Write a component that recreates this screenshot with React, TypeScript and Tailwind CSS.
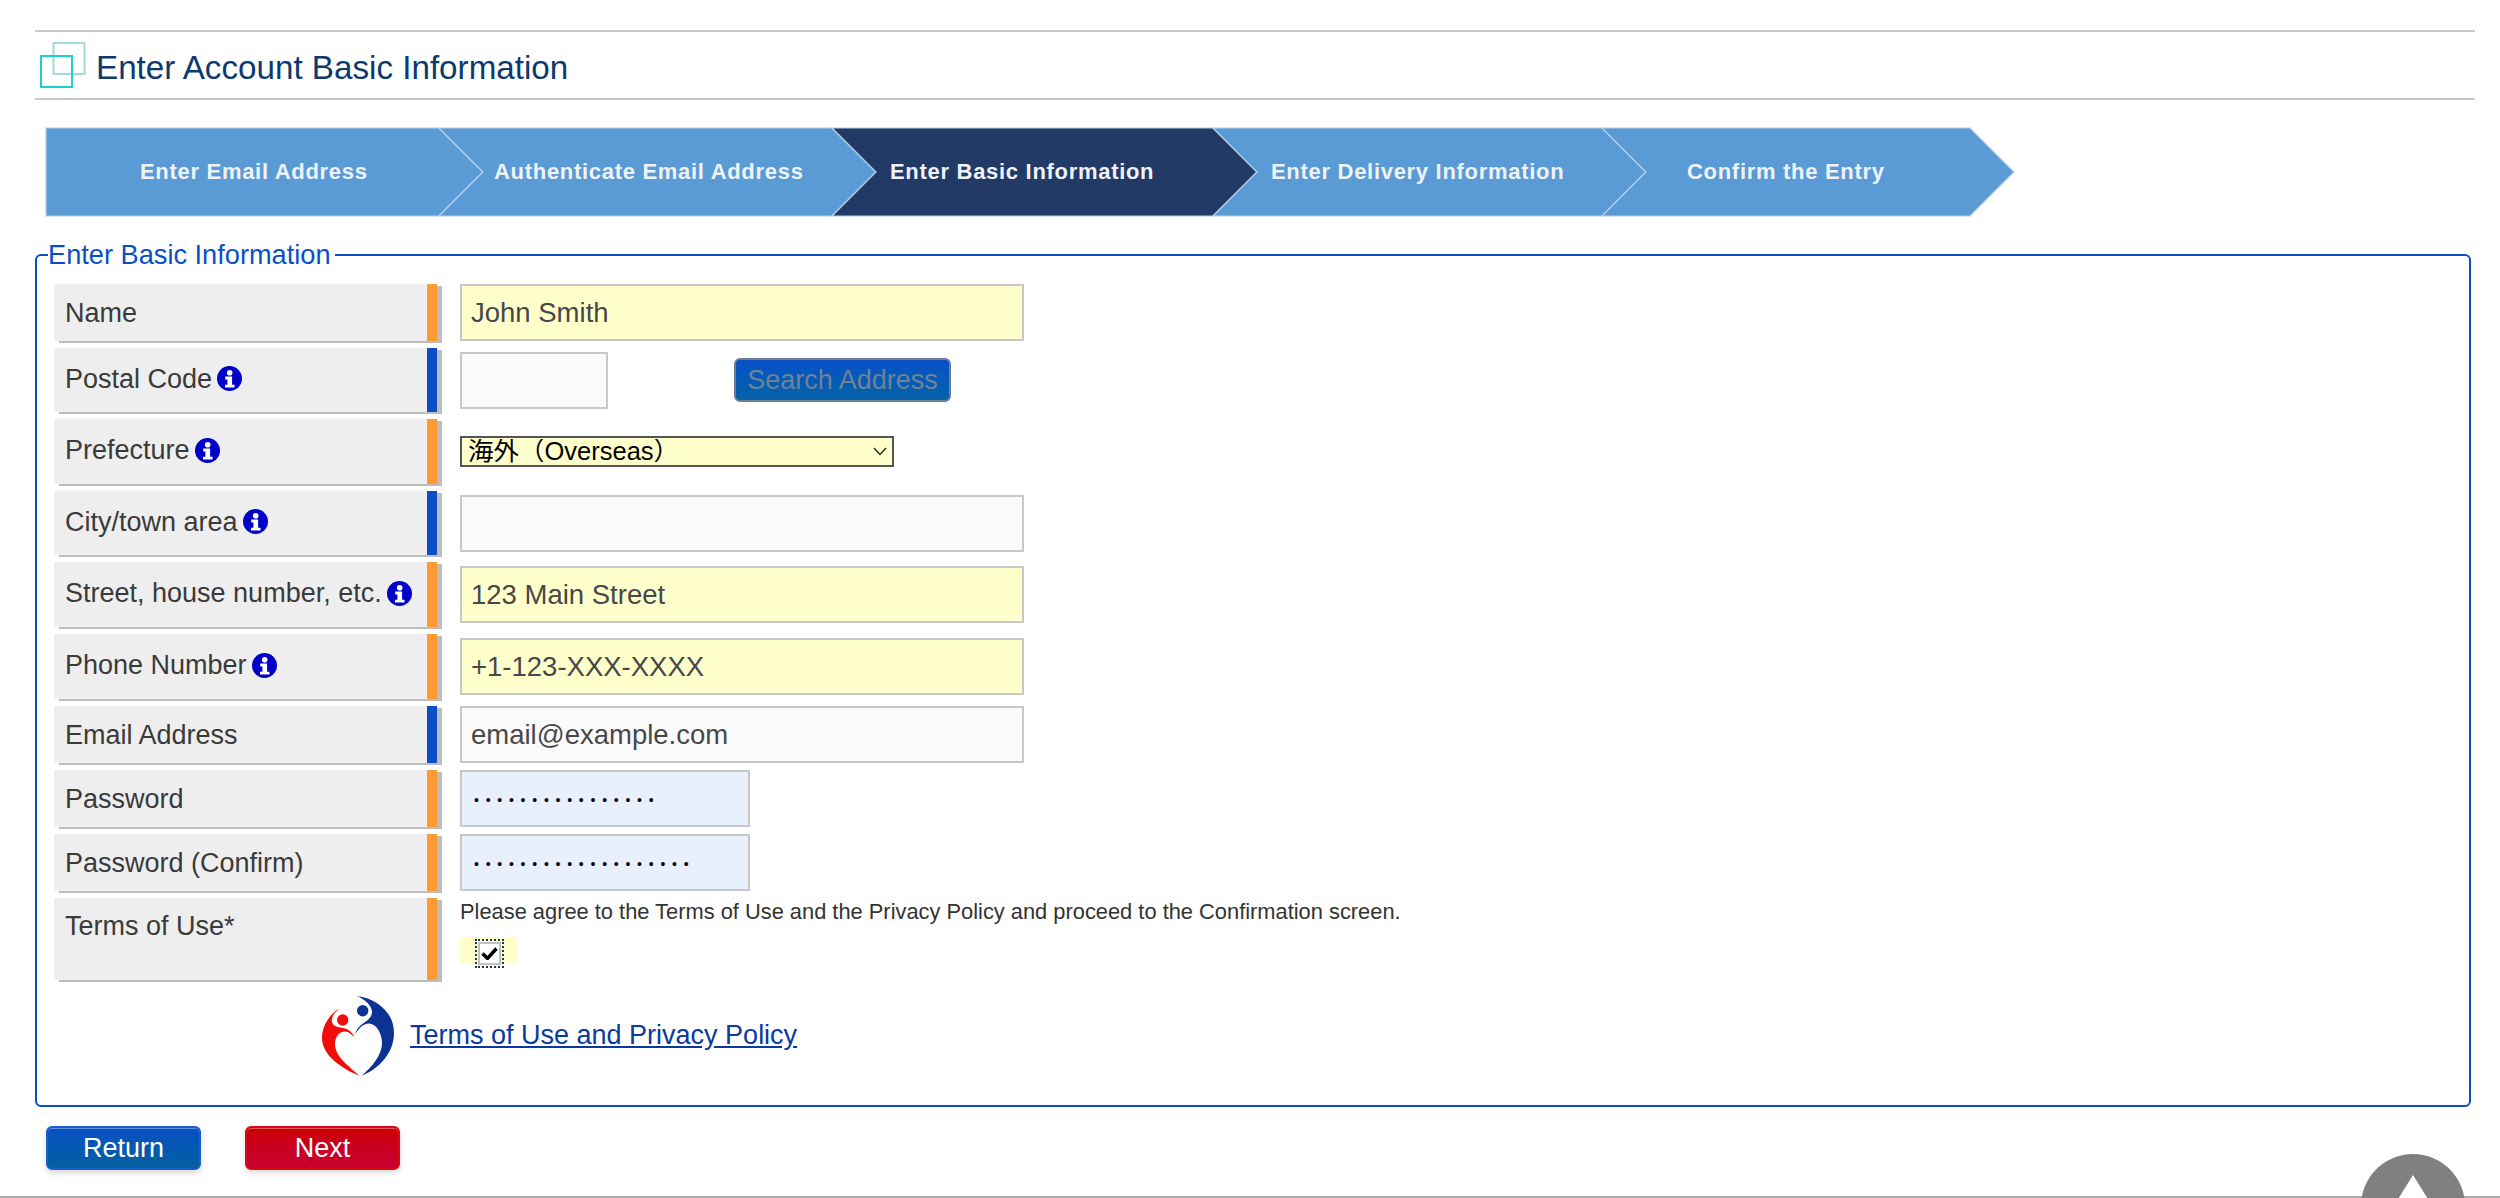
import React from "react";

const sans = "font-['Liberation_Sans','Noto_Sans_CJK_JP',sans-serif]";

function InfoIcon() {
  return (
    <svg viewBox="0 0 25 25" className="ml-[5px] h-[25px] w-[25px] shrink-0">
      <circle cx="12.5" cy="12.5" r="12.5" fill="#0000c8" />
      <circle cx="12.7" cy="6.8" r="2.8" fill="#fff" />
      <path d="M8.2 10.6h6.9v8.2h2.4v2.8H8v-2.8h2.4v-5.4H8.2z" fill="#fff" />
    </svg>
  );
}

function Label({
  text,
  info,
  required,
  h,
  top,
}: {
  text: string;
  info?: boolean;
  required?: boolean;
  h: string;
  top?: boolean;
}) {
  return (
    <div
      className={`flex w-[383px] shrink-0 border-r-[10px] bg-[#eeeeee] pl-[11px] text-[27px] leading-[30px] text-[#3a3a3a] shadow-[5px_2px_0_#bdbdbd] ${h} ${
        required ? "border-[#ff9933]" : "border-[#0a4fc8]"
      } ${top ? "items-start pt-[13px]" : "items-center"} ${info ? "pb-[3px]" : ""}`}
    >
      <span>{text}</span>
      {info && <InfoIcon />}
    </div>
  );
}

function Field({
  value,
  w,
  bg,
  text,
}: {
  value: string;
  w: string;
  bg: string;
  text?: string;
}) {
  return (
    <input
      readOnly
      value={value}
      className={`h-[57px] border-2 border-[#c8c8c8] outline-none ${w} ${bg} ${text ?? "pl-[9px] text-[27.5px] text-[#484848]"}`}
    />
  );
}

function Row({ children }: { children: React.ReactNode }) {
  return <div className="flex items-center gap-[23px]">{children}</div>;
}

function Step({
  text,
  w,
  width,
  active,
  pl,
  first,
}: {
  text: string;
  w: string;
  width: number;
  active?: boolean;
  pl: string;
  first?: boolean;
}) {
  const fill = active ? "#233a66" : "#5b9bd5";
  const points = first
    ? `0,0 ${width - 44},0 ${width},44 ${width - 44},88 0,88`
    : `0,0 ${width - 44},0 ${width},44 ${width - 44},88 0,88 44,44`;
  return (
    <div className={`relative h-[88px] shrink-0 ${w} ${first ? "" : "-ml-[44px]"}`}>
      <svg viewBox={`0 0 ${width} 88`} className="absolute inset-0 h-full w-full overflow-visible">
        <polygon points={points} fill={fill} stroke="#b4cfea" strokeWidth="1.2" />
      </svg>
      <span
        className={`relative flex h-full items-center pb-[1px] text-[22px] font-bold tracking-[0.7px] text-[#eef3fa] ${pl}`}
      >
        {text}
      </span>
    </div>
  );
}

function Logo() {
  return (
    <svg viewBox="0 0 72 81" className="h-[81px] w-[72px] shrink-0">
      <path
        d="M17.3 13.3C7 20 0 31 0 43.3 0 60 20 74 37.3 80.7 28 72 13 62 13 49c0-8 5-12.5 10-12.5 3 0 7 3 9.3 5.8C31 38 27 34 21 33c-6-1-10-2-11-6-1-5 3-10 7.3-13.7z"
        fill="#f30c0c"
      />
      <circle cx="20.7" cy="25" r="5.7" fill="#f30c0c" />
      <path
        d="M34.7.7C56 4 72 18 72 38c0 20-15 36-32.3 42.7C50 72 60 60 60 48c0-10-6-19.5-13-19.5-6 0-11 5.5-14 11.5 1-5 4-9 8-11.5 5-3.5 9-6.5 9-11.5 0-7-8-13-15.3-16.3z"
        fill="#0c3292"
      />
      <circle cx="40.7" cy="15.7" r="5.7" fill="#0c3292" />
    </svg>
  );
}

function GlossyButton({ text, classes }: { text: string; classes: string }) {
  return (
    <button
      className={`h-[44px] w-[155px] rounded-[6px] border-2 text-[27px] leading-none text-white shadow-[inset_0_1px_0_rgba(255,255,255,0.35),0_3px_6px_rgba(0,0,0,0.15)] ${classes}`}
    >
      {text}
    </button>
  );
}

export default function App() {
  return (
    <div className={`relative h-[1198px] w-[2500px] overflow-hidden bg-white ${sans}`}>
      <div className="px-[35px] pt-[30px] pr-[25px]">
        <header className="flex h-[70px] items-center gap-[10px] border-y-[2px] border-[#c9c9c9] pl-[5px]">
          <svg viewBox="0 0 46 46" className="h-[46px] w-[46px] shrink-0">
            <rect x="13.5" y="1" width="31" height="31" fill="none" stroke="#a6d8d8" strokeWidth="2" />
            <rect x="1" y="14" width="31" height="31" fill="none" stroke="#18d2d2" strokeWidth="2" />
          </svg>
          <h1 className="pt-[5px] text-[33.2px] leading-none text-[#0c3a6e]">Enter Account Basic Information</h1>
        </header>

        <nav className="mt-[28px] ml-[11px] flex">
          <Step first text="Enter Email Address" w="w-[437px]" width={437} pl="pl-[94px]" />
          <Step text="Authenticate Email Address" w="w-[437px]" width={437} pl="pl-[55px]" />
          <Step active text="Enter Basic Information" w="w-[425px]" width={425} pl="pl-[58px]" />
          <Step text="Enter Delivery Information" w="w-[433px]" width={433} pl="pl-[58px]" />
          <Step text="Confirm the Entry" w="w-[412px]" width={412} pl="pl-[85px]" />
        </nav>

        <fieldset className="mt-[24px] h-[867px] w-[2436px] rounded-[6px] border-2 border-[#0a4fc8] pl-[17px]">
          <legend className="-ml-[6px] pr-[4px] text-[27.2px] leading-[30px] text-[#0a4fc8]">
            Enter Basic Information
          </legend>
          <div className="flex flex-col gap-[7px] pt-[14px]">
            <Row>
              <Label text="Name" required h="h-[57px]" />
              <Field value="John Smith" w="w-[564px]" bg="bg-[#ffffcc]" />
            </Row>
            <Row>
              <Label text="Postal Code" info h="h-[64px]" />
              <div className="flex items-center">
                <Field value="" w="w-[148px]" bg="bg-[#fafafa]" />
                <button className="ml-[126px] h-[44px] w-[217px] rounded-[6px] border-2 border-[#6d7f92] bg-gradient-to-b from-[#0a50c8] to-[#0663a8] text-[27px] leading-none text-[#6f8296]">
                  Search Address
                </button>
              </div>
            </Row>
            <Row>
              <Label text="Prefecture" info required h="h-[65px]" />
              <div className="relative">
                <select className="block h-[31px] w-[434px] appearance-none rounded-none border-2 border-[#555] bg-[#ffffcc] pl-[6px] text-[25.5px] leading-none text-black outline-none">
                  <option>海外（Overseas）</option>
                </select>
                <svg viewBox="0 0 14 9" className="pointer-events-none absolute top-[11px] right-[7px] h-[9px] w-[14px]">
                  <path d="M1 1l6 6.5L13 1" fill="none" stroke="#222" strokeWidth="1.3" />
                </svg>
              </div>
            </Row>
            <Row>
              <Label text="City/town area" info h="h-[64px]" />
              <Field value="" w="w-[564px]" bg="bg-[#fafafa]" />
            </Row>
            <Row>
              <Label text="Street, house number, etc." info required h="h-[65px]" />
              <Field value="123 Main Street" w="w-[564px]" bg="bg-[#ffffcc]" />
            </Row>
            <Row>
              <Label text="Phone Number" info required h="h-[65px]" />
              <Field value="+1-123-XXX-XXXX" w="w-[564px]" bg="bg-[#ffffcc]" />
            </Row>
            <Row>
              <Label text="Email Address" h="h-[57px]" />
              <Field value="email@example.com" w="w-[564px]" bg="bg-[#fafafa]" />
            </Row>
            <Row>
              <Label text="Password" required h="h-[57px]" />
              <Field
                value="••••••••••••••••"
                w="w-[290px]"
                bg="bg-[#e8f0fe]"
                text="pl-[12px] pt-[3px] text-[14px] tracking-[6.75px] text-black"
              />
            </Row>
            <Row>
              <Label text="Password (Confirm)" required h="h-[57px]" />
              <Field
                value="•••••••••••••••••••"
                w="w-[290px]"
                bg="bg-[#e8f0fe]"
                text="pl-[12px] pt-[3px] text-[14px] tracking-[6.75px] text-black"
              />
            </Row>
            <Row>
              <Label text="Terms of Use*" required top h="h-[82px]" />
              <div className="flex h-[82px] flex-col items-start self-start pt-[2px]">
                <p className="text-[21.85px] leading-[24px] text-[#333]">
                  Please agree to the Terms of Use and the Privacy Policy and proceed to the Confirmation screen.
                </p>
                <div className="mt-[13px] flex h-[26px] w-[58px] items-start bg-[#ffffcc] pl-[15px]">
                  <span className="mt-[2px] flex h-[29px] w-[29px] shrink-0 items-center justify-center border-2 border-dotted border-[#1a3a4a]">
                    <span className="flex h-[23px] w-[23px] shrink-0 items-center justify-center border-2 border-[#c0c0c0] bg-white">
                      <svg viewBox="0 0 17 13" className="h-[13px] w-[17px] shrink-0">
                        <path d="M1.5 6.5l5 5L15.5 1.5" fill="none" stroke="#000" strokeWidth="3.4" />
                      </svg>
                    </span>
                  </span>
                </div>
              </div>
            </Row>
          </div>
          <div className="mt-[15px] ml-[268px] flex items-center gap-[16px]">
            <Logo />
            <a href="#" className="pb-[2px] text-[27px] leading-[30px] text-[#0a3a9e] underline">
              Terms of Use and Privacy Policy
            </a>
          </div>
        </fieldset>

        <div className="mt-[19px] ml-[11px] flex gap-[44px]">
          <GlossyButton text="Return" classes="border-[#1a5ed0] bg-gradient-to-b from-[#0a4fc4] to-[#06609f]" />
          <GlossyButton text="Next" classes="border-[#d80a18] bg-gradient-to-b from-[#cc0000] to-[#c80030]" />
        </div>
      </div>

      <div className="absolute inset-x-0 bottom-0 h-[2px] bg-[#aaaaaa]" />
      <div className="absolute top-[1154px] left-[2361px] h-[104px] w-[104px] rounded-full bg-[#808080]">
        <svg viewBox="0 0 52 42" className="absolute top-[21px] left-[26px] h-[42px] w-[52px]">
          <polygon points="26,0 52,42 0,42" fill="#fff" />
        </svg>
      </div>
    </div>
  );
}
